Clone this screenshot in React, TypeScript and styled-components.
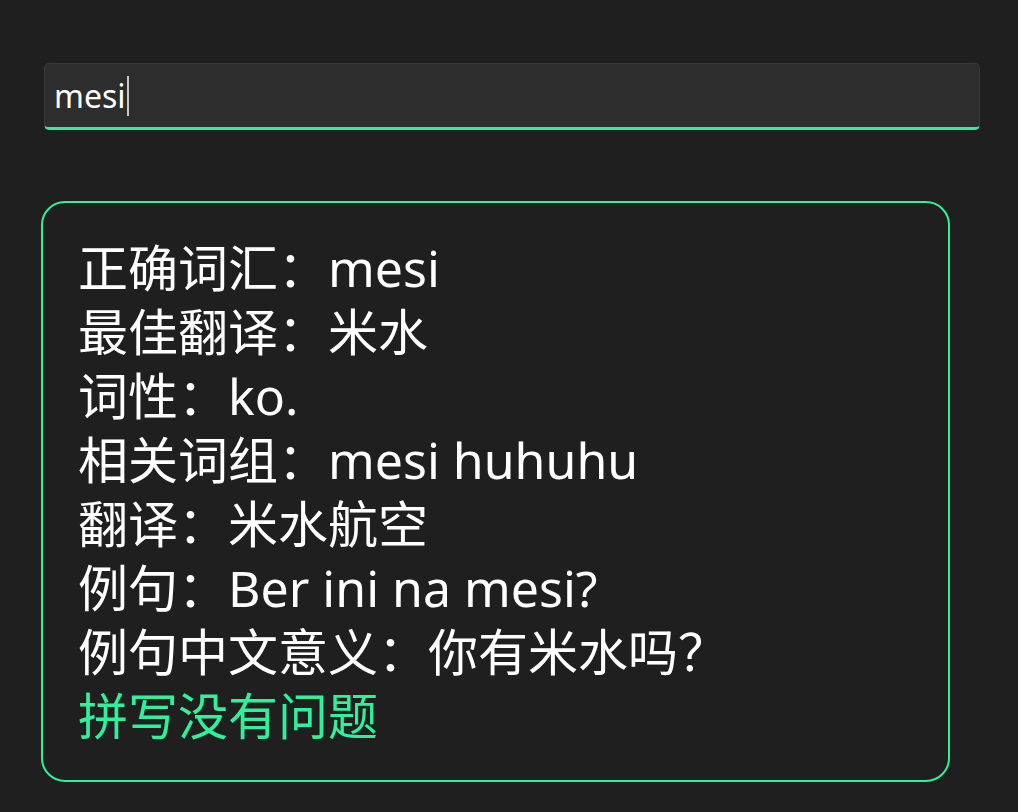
import React from "react";
import styled, { createGlobalStyle } from "styled-components";

const GREEN = "#2ff09b";

const Global = createGlobalStyle`
  html, body {
    margin: 0;
    padding: 0;
    background: #1f1f1f;
  }
  body {
    font-family: "Noto Sans", "Noto Sans CJK SC", sans-serif;
  }
`;

const Page = styled.div`
  display: flex;
  flex-direction: column;
  align-items: flex-start;
  padding: 63px 0 0 41px;
  min-height: 812px;
  box-sizing: border-box;
  background: #1f1f1f;
`;

const SearchBox = styled.div`
  margin-left: 3px;
  width: 936px;
  height: 67px;
  box-sizing: border-box;
  display: flex;
  align-items: center;
  padding: 0 9px 0 9px;
  background: #2d2d2d;
  border: 1px solid #3a3a3a;
  border-bottom: 3px solid ${GREEN};
  border-radius: 5px;
  color: #ffffff;
  font-family: "Noto Sans", "Noto Sans CJK SC", sans-serif;
  font-size: 32px;
`;

const Caret = styled.span`
  display: inline-block;
  width: 2px;
  height: 40px;
  margin-left: 1px;
  background: #c8c8c8;
`;

const Card = styled.div`
  margin-top: 71px;
  width: 909px;
  height: 581px;
  box-sizing: border-box;
  border: 2px solid ${GREEN};
  border-radius: 24px;
  padding: 33px 36px 0 35px;
  display: flex;
  flex-direction: column;
`;

const Line = styled.div<{ $accent?: boolean }>`
  font-family: "Noto Sans", "Noto Sans CJK SC", sans-serif;
  font-size: 50px;
  line-height: 64px;
  height: 64px;
  white-space: nowrap;
  color: ${(p) => (p.$accent ? GREEN : "#ffffff")};
`;

const lines = [
  "正确词汇：mesi",
  "最佳翻译：米水",
  "词性：ko.",
  "相关词组：mesi huhuhu",
  "翻译：米水航空",
  "例句：Ber ini na mesi?",
  "例句中文意义：你有米水吗？",
];

export default function App() {
  return (
    <>
      <Global />
      <Page>
        <SearchBox>
          <span>mesi</span>
          <Caret />
        </SearchBox>
        <Card>
          {lines.map((l) => (
            <Line key={l}>{l}</Line>
          ))}
          <Line $accent>拼写没有问题</Line>
        </Card>
      </Page>
    </>
  );
}
